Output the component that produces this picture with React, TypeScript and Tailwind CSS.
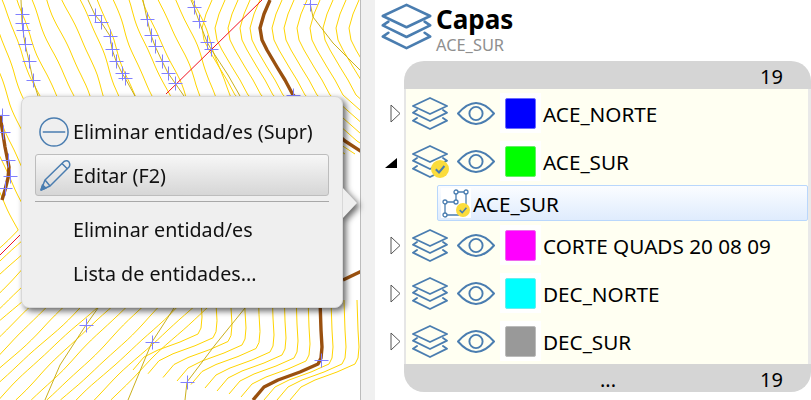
import { ReactNode } from 'react';

const BLUE = '#4a7db0';

const wobble = (y: number, seed: number) =>
  1.8 * Math.sin(y / 21 + seed) + 0.6 * Math.sin(y / 8 + seed * 2.3);

// main contours: run down-right, then turn back down-left under the popup
const mainX = (y: number) => (y <= 230 ? 0.42 * y : 96.6 - 1.05 * (y - 230));

function contourPath(x0: number, seed: number) {
  let d = '';
  for (let y = 0; y <= 400; y += 5) {
    const x = x0 + mainX(y) + wobble(y, seed);
    d += `${y === 0 ? 'M' : 'L'}${x.toFixed(1)} ${y} `;
  }
  return d;
}

const brownTop: number[][] = [[270, 0], [264, 14], [260, 28], [262, 40], [267, 50], [277, 67], [285, 80], [293, 95], [345, 141], [365, 154]];
const brownBottom: number[][] = [[320, 300], [321, 330], [322, 347], [321, 358], [318, 364], [300, 372], [278, 380], [264, 387], [253, 400]];
const brownLeft: number[][] = [[0, 115], [5, 147], [9, 167], [8, 178], [5, 190], [2, 200]];
const brownRight: number[][] = [[343, 280], [362, 271]];

const toPath = (pts: number[][], dx = 0, dy = 0) =>
  pts.map((p, i) => `${i === 0 ? 'M' : 'L'}${p[0] + dx} ${p[1] + dy}`).join(' ');

const oliveLines: number[][][] = [
  [[21, 0], [22, 23], [23, 30], [25, 44], [29, 61], [33, 80], [38, 96]],
  [[88, 0], [95, 15], [101, 22], [110, 36], [112, 49], [116, 61], [122, 73], [125, 78], [135, 96]],
  [[143, 0], [147, 19], [151, 35], [155, 46], [162, 61], [168, 73], [175, 83], [184, 96]],
  [[191, 0], [194, 7], [199, 21], [207, 42], [211, 49], [228, 75], [240, 96]],
  [[310, 3], [313, 17], [333, 43], [360, 70]],
  [[98, 308], [86, 325], [60, 365], [45, 400]],
  [[174, 308], [152, 342], [128, 400]],
  [[245, 308], [215, 345], [187, 382], [185, 400]],
];
const crosses = [
  [22, 14], [22, 23], [23, 30], [25, 44], [29, 61], [33, 80],
  [95, 15], [101, 22], [110, 36], [112, 49], [116, 61], [122, 73], [125, 78],
  [147, 19], [151, 35], [155, 46], [162, 61], [168, 73], [175, 83],
  [194, 7], [199, 21], [207, 42], [211, 49],
  [310, 4], [293, 95], [2, 115], [3, 132], [8, 160], [10, 176], [5, 188],
  [86, 325], [152, 342], [187, 382], [321, 360],
];

function MapView() {
  const contours = [];
  for (let x0 = -320; x0 <= 205; x0 += 16) contours.push(x0);
  return (
    <svg viewBox="0 0 360 400" className="h-full w-[360px] shrink-0 bg-white">
      {contours.map((x0, i) => (
        <path key={x0} d={contourPath(x0, i)} fill="none" stroke="#ffd500" strokeWidth="1" />
      ))}
      {[-58, -45, -32, -20, -10, 12, 24, 37, 50, 63, 76, 89, 102].map((dx) => (
        <path key={dx} d={toPath(brownTop, dx)} fill="none" stroke="#ffd500" strokeWidth="1" />
      ))}
      {[-120, -105, -90, -76, -62, -48, -36, -24, -12, 11, 24, 37].map((dx) => (
        <path key={dx} d={toPath(brownBottom, dx, dx < 0 ? dx * 0.25 : 0)} fill="none" stroke="#ffd500" strokeWidth="1" />
      ))}
      {oliveLines.map((g, i) => (
        <path key={i} d={toPath(g)} fill="none" stroke="#cbb01c" strokeWidth="1" />
      ))}
      <path d="M262 0 L166 94 M20 235 L0 255" stroke="#f01020" strokeWidth="1" fill="none" />
      {[brownTop, brownBottom, brownLeft, brownRight].map((b, i) => (
        <path key={i} d={toPath(b)} fill="none" stroke="#99500f" strokeWidth="3.4" strokeLinejoin="round" />
      ))}
      {crosses.map((c, i) => (
        <path
          key={i}
          d={`M${c[0] - 6.5} ${c[1] + 0.5}H${c[0] + 7.5}M${c[0] + 0.5} ${c[1] - 6.5}V${c[1] + 7.5}`}
          stroke="#8080ff"
          strokeWidth="1"
        />
      ))}
    </svg>
  );
}

function LayersIcon({ className }: { className: string }) {
  return (
    <svg viewBox="0 0 38 33" className={className} fill="none" stroke={BLUE} strokeWidth="1.9" strokeLinejoin="round" strokeLinecap="round">
      <path d="M19 1 L36 9 L19 17 L2 9 Z" />
      <path d="M6 13 L2 15.7 L19 24 L36 15.7 L32 13" />
      <path d="M6 21 L2 23.7 L19 32 L36 23.7 L32 21" />
    </svg>
  );
}

function EyeIcon() {
  return (
    <svg viewBox="0 0 38 23" className="h-[23px] w-[38px]" fill="none" stroke={BLUE} strokeWidth="1.9">
      <path d="M1 11.5 C8 3.5 13 1 19 1 C25 1 30 3.5 37 11.5 C30 19.5 25 22 19 22 C13 22 8 19.5 1 11.5 Z" />
      <circle cx="19" cy="11.5" r="6.6" />
    </svg>
  );
}

function CheckBadge({ className }: { className: string }) {
  return (
    <svg viewBox="0 0 18 18" className={className}>
      <circle cx="9" cy="9" r="9" fill="#fbdc3c" />
      <path d="M4.8 9.2 L8 12.4 L13.4 6" fill="none" stroke={BLUE} strokeWidth="2" />
    </svg>
  );
}

function Row({
  name,
  color,
  border,
  expanded,
}: {
  name: string;
  color: string;
  border: string;
  expanded?: boolean;
}) {
  return (
    <div className="flex h-12">
      <div className="flex w-[29px] shrink-0 items-center">
        {expanded ? (
          <svg viewBox="0 0 12 10" className="ml-[10px] mt-[4px] h-[10px] w-[12px]">
            <path d="M0 10 H12 V0 Z" fill="#000" />
          </svg>
        ) : (
          <svg viewBox="0 0 11 19" className="ml-[15px] h-[19px] w-[11px]">
            <path d="M1 1 L10 9.5 L1 18 Z" fill="#fff" stroke="#555" strokeWidth="1" />
          </svg>
        )}
      </div>
      <div className="flex flex-1 items-center border-l-2 border-[#e6e6e6] border-r-[3px] border-r-[#e9e9e9] bg-[#fffff2] pl-[5px]">
        <div className="relative">
          <LayersIcon className="h-[33px] w-[38px]" />
          {expanded && <CheckBadge className="absolute left-[20px] top-[15px] h-[18px] w-[18px]" />}
        </div>
        <div className="ml-2">
          <EyeIcon />
        </div>
        <div className="ml-[5px] flex h-10 w-[41px] items-center justify-center bg-white">
          <div className={`h-[31px] w-[31px] rounded-[2px] border ${border}`} style={{ backgroundColor: color }} />
        </div>
        <span className="ml-[2px] mt-[3px] text-[20.7px] leading-none text-black">{name}</span>
      </div>
    </div>
  );
}

function EntityRow() {
  return (
    <div className="flex h-9">
      <div className="w-[29px] shrink-0" />
      <div className="flex flex-1 border-l-2 border-[#e6e6e6] border-r-[3px] border-r-[#e9e9e9] bg-[#fffff2] pl-[31px]">
        <div className="flex flex-1 items-center rounded-[2px] border border-[#b9d7fc] bg-gradient-to-b from-[#fbfdff] to-[#dfecfd] pl-[3px]">
          <div className="relative h-[30px] w-[30px] bg-white">
            <svg viewBox="0 0 30 30" className="h-[30px] w-[30px]" fill="none" stroke={BLUE} strokeWidth="1.3">
              <path d="M4 14 H15 V4 H25 V24 M4 14 V27 H18" />
              <circle cx="4" cy="14" r="2" fill="#fff" />
              <circle cx="15" cy="14" r="2" fill="#fff" />
              <circle cx="15" cy="4" r="2" fill="#fff" />
              <circle cx="25" cy="4" r="2" fill="#fff" />
              <circle cx="4" cy="27" r="2" fill="#fff" />
            </svg>
            <CheckBadge className="absolute left-[15px] top-[15px] h-[14px] w-[14px]" />
          </div>
          <span className="ml-[2px] mt-[3px] text-[20.7px] leading-none text-black">ACE_SUR</span>
        </div>
      </div>
    </div>
  );
}

function MenuItem({ icon, children }: { icon?: ReactNode; children: ReactNode }) {
  return (
    <div className="flex h-11 items-center">
      <div className="w-[38px] shrink-0 pl-[4px]">{icon}</div>
      <span className="whitespace-nowrap text-[19.7px] leading-none text-[#111]">{children}</span>
    </div>
  );
}

function ContextMenu() {
  return (
    <div className="absolute left-[21px] top-[96px] w-[322px] drop-shadow-[3px_3px_3px_rgba(0,0,0,0.6)]">
      <svg viewBox="0 0 16 32" className="absolute left-[321px] top-[91px] h-8 w-4">
        <path d="M0 0 L15 16 L0 32 Z" fill="#efefef" />
      </svg>
      <div className="relative h-[212px] rounded-[8px] border border-[#d8d8d8] bg-[#efefef] px-[13px] pt-[13px]">
        <MenuItem
          icon={
            <svg viewBox="0 0 32 32" className="block h-[30px] w-[30px]" fill="none" stroke={BLUE} strokeWidth="1.6">
              <circle cx="16" cy="16" r="15" />
              <path d="M4 16 H28" />
            </svg>
          }
        >
          Eliminar entidad/es (Supr)
        </MenuItem>
        <div className="flex h-[42px] items-center rounded-[3px] border border-[#bdbdbd] bg-gradient-to-b from-[#f7f7f7] to-[#d6d6d6]">
          <svg viewBox="0 0 32 32" className="ml-[3px] h-8 w-8 shrink-0" fill="none" stroke={BLUE} strokeWidth="1.5" strokeLinejoin="round">
            <path d="M2 31 L6 21 L25 2.5 Q28 1 30 3 Q31.5 6 30 8 L11 27 Z" />
            <path d="M6 21 L11 27 M23 4.5 L28.5 10" />
            <path d="M2 31 L3.5 26 L7 29 Z" fill={BLUE} />
          </svg>
          <span className="ml-[2px] mt-[1px] text-[19.7px] leading-none text-[#111]">Editar (F2)</span>
        </div>
        <div className="mb-[6px] mt-[5px] h-px bg-[#a8a8a8]" />
        <MenuItem>Eliminar entidad/es</MenuItem>
        <MenuItem>Lista de entidades...</MenuItem>
      </div>
    </div>
  );
}

export default function App() {
  return (
    <div className="flex h-[400px] w-[811px] overflow-hidden bg-white font-['Noto_Sans',sans-serif]">
      <div className="relative flex shrink-0 border-r border-[#bcbcbc]">
        <MapView />
        <ContextMenu />
      </div>
      <div className="w-[14px] shrink-0 bg-[#f0f0f0]" />
      <div className="flex min-w-0 flex-1 flex-col">
        <div className="flex h-[61px] items-start pl-[5px] pt-[3px]">
          <LayersIcon className="h-[47px] w-[53px]" />
          <div className="ml-[3px] flex flex-col">
            <span className="mt-[1px] h-[30px] text-[26px] font-bold leading-[30px] text-black">Capas</span>
            <span className="mt-[3px] h-[16px] text-[16.4px] leading-[16px] text-[#8f8f8f]">ACE_SUR</span>
          </div>
        </div>
        <div className="ml-[29px] flex h-7 items-center justify-end rounded-t-[20px] bg-[#d5d5d5] pr-[28px] pt-[3px] text-[20px] leading-none text-black">
          19
        </div>
        <Row name="ACE_NORTE" color="#0000ff" border="border-[#6a6aff]" />
        <Row name="ACE_SUR" color="#00ff00" border="border-[#66ee66]" expanded />
        <EntityRow />
        <Row name="CORTE QUADS 20 08 09" color="#ff00ff" border="border-[#ee66ee]" />
        <Row name="DEC_NORTE" color="#00ffff" border="border-[#66eeee]" />
        <Row name="DEC_SUR" color="#999999" border="border-[#bbbbbb]" />
        <div className="relative ml-[29px] flex h-7 -translate-y-px items-center justify-end rounded-b-[20px] bg-[#d5d5d5] pr-[28px] pt-[3px] text-[20px] leading-none text-black">
          <span className="absolute left-[196px] top-[6px] text-[20px]">...</span>
          19
        </div>
      </div>
    </div>
  );
}
